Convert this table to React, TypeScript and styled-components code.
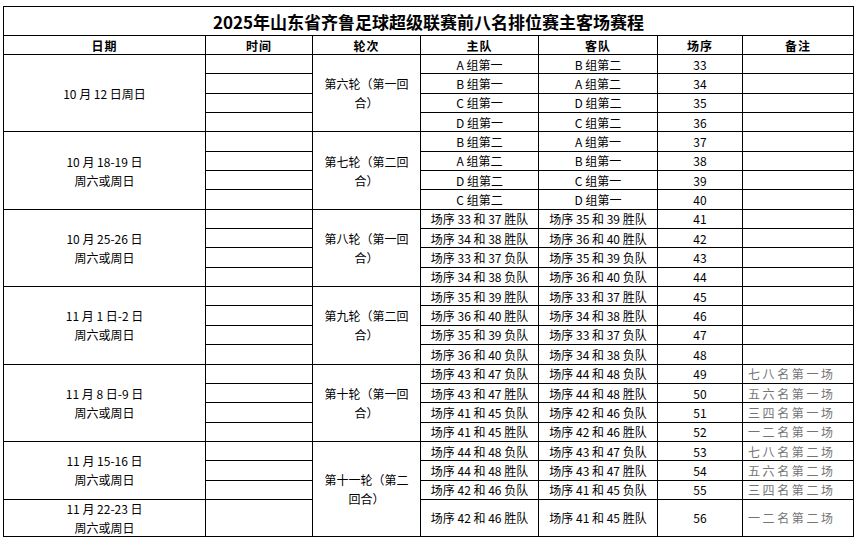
import React from 'react';
import styled, { createGlobalStyle } from 'styled-components';

const GlobalStyle = createGlobalStyle`
  html, body {
    margin: 0;
    padding: 0;
    background: #ffffff;
  }
  body {
    font-family: "Noto Sans CJK SC", "Noto Sans", sans-serif;
    color: #000;
  }
`;

const Page = styled.div`
  padding: 6px 0 0 3px;
`;

const Sheet = styled.div`
  display: grid;
  width: 851px;
  grid-template-columns: 202px 107px 108px 118px 119px 85px 111px;
  grid-template-rows: 29px 19px repeat(23, 19.35px) 37px;
  border-top: 1px solid #000;
  border-left: 1px solid #000;
  box-sizing: border-box;
`;

interface CellProps {
    $span?: number;
    $align?: 'left' | 'center';
}

const Cell = styled.div<CellProps>`
  grid-row: span ${p => p.$span || 1};
  border-right: 1px solid #000;
  border-bottom: 1px solid #000;
  display: flex;
  flex-direction: column;
  align-items: ${p => (p.$align === 'left' ? 'flex-start' : 'center')};
  justify-content: center;
  font-size: 12px;
  line-height: 19px;
  white-space: nowrap;
  overflow: hidden;
  min-width: 0;
`;

const TitleCell = styled(Cell)`
  grid-column: 1 / -1;
  font-size: 17px;
  font-weight: 700;
  line-height: 28px;
  padding-top: 1px;
`;

const HeadCell = styled(Cell)`
  font-size: 12px;
  font-weight: 700;
  letter-spacing: 1px;
`;

const NoteCell = styled(Cell)`
  padding-left: 5px;
  color: #747474;
  letter-spacing: 2.6px;
`;

const Line = styled.span`
  display: block;
`;

interface Match {
    home: string;
    away: string;
    no: number;
    note?: string;
}

interface DateBlock {
    lines: string[];
    rows: number;
}

interface Round {
    lines: string[];
    dates: DateBlock[];
    matches: Match[];
}

const seq = (a: number, b: number, r: '胜' | '负') => `场序 ${a} 和 ${b} ${r}队`;

const rounds: Round[] = [
    {
        lines: ['第六轮（第一回', '合）'],
        dates: [{ lines: ['10 月 12 日周日'], rows: 4 }],
        matches: [
            { home: 'A 组第一', away: 'B 组第二', no: 33 },
            { home: 'B 组第一', away: 'A 组第二', no: 34 },
            { home: 'C 组第一', away: 'D 组第二', no: 35 },
            { home: 'D 组第一', away: 'C 组第二', no: 36 },
        ],
    },
    {
        lines: ['第七轮（第二回', '合）'],
        dates: [{ lines: ['10 月 18-19 日', '周六或周日'], rows: 4 }],
        matches: [
            { home: 'B 组第二', away: 'A 组第一', no: 37 },
            { home: 'A 组第二', away: 'B 组第一', no: 38 },
            { home: 'D 组第二', away: 'C 组第一', no: 39 },
            { home: 'C 组第二', away: 'D 组第一', no: 40 },
        ],
    },
    {
        lines: ['第八轮（第一回', '合）'],
        dates: [{ lines: ['10 月 25-26 日', '周六或周日'], rows: 4 }],
        matches: [
            { home: seq(33, 37, '胜'), away: seq(35, 39, '胜'), no: 41 },
            { home: seq(34, 38, '胜'), away: seq(36, 40, '胜'), no: 42 },
            { home: seq(33, 37, '负'), away: seq(35, 39, '负'), no: 43 },
            { home: seq(34, 38, '负'), away: seq(36, 40, '负'), no: 44 },
        ],
    },
    {
        lines: ['第九轮（第二回', '合）'],
        dates: [{ lines: ['11 月 1 日-2 日', '周六或周日'], rows: 4 }],
        matches: [
            { home: seq(35, 39, '胜'), away: seq(33, 37, '胜'), no: 45 },
            { home: seq(36, 40, '胜'), away: seq(34, 38, '胜'), no: 46 },
            { home: seq(35, 39, '负'), away: seq(33, 37, '负'), no: 47 },
            { home: seq(36, 40, '负'), away: seq(34, 38, '负'), no: 48 },
        ],
    },
    {
        lines: ['第十轮（第一回', '合）'],
        dates: [{ lines: ['11 月 8 日-9 日', '周六或周日'], rows: 4 }],
        matches: [
            { home: seq(43, 47, '负'), away: seq(44, 48, '负'), no: 49, note: '七八名第一场' },
            { home: seq(43, 47, '胜'), away: seq(44, 48, '胜'), no: 50, note: '五六名第一场' },
            { home: seq(41, 45, '负'), away: seq(42, 46, '负'), no: 51, note: '三四名第一场' },
            { home: seq(41, 45, '胜'), away: seq(42, 46, '胜'), no: 52, note: '一二名第一场' },
        ],
    },
    {
        lines: ['第十一轮（第二', '回合）'],
        dates: [
            { lines: ['11 月 15-16 日', '周六或周日'], rows: 3 },
            { lines: ['11 月 22-23 日', '周六或周日'], rows: 1 },
        ],
        matches: [
            { home: seq(44, 48, '负'), away: seq(43, 47, '负'), no: 53, note: '七八名第二场' },
            { home: seq(44, 48, '胜'), away: seq(43, 47, '胜'), no: 54, note: '五六名第二场' },
            { home: seq(42, 46, '负'), away: seq(41, 45, '负'), no: 55, note: '三四名第二场' },
            { home: seq(42, 46, '胜'), away: seq(41, 45, '胜'), no: 56, note: '一二名第二场' },
        ],
    },
];

const headers = ['日期', '时间', '轮次', '主队', '客队', '场序', '备注'];

// cells are emitted row by row; the spanning date/round cells get skipped by auto placement
const renderRound = (round: Round) => {
    const out: React.ReactNode[] = [];
    let dateIdx = 0;
    let nextDateRow = 0;
    round.matches.forEach((m, i) => {
        if (i === nextDateRow && dateIdx < round.dates.length) {
            const d = round.dates[dateIdx];
            out.push(
                <Cell key={`d${m.no}`} $span={d.rows}>
                    {d.lines.map(l => <Line key={l}>{l}</Line>)}
                </Cell>
            );
            nextDateRow += d.rows;
            dateIdx++;
        }
        out.push(<Cell key={`t${m.no}`} />);
        if (i === 0) {
            out.push(
                <Cell key={`r${m.no}`} $span={round.matches.length}>
                    {round.lines.map(l => <Line key={l}>{l}</Line>)}
                </Cell>
            );
        }
        out.push(<Cell key={`h${m.no}`}>{m.home}</Cell>);
        out.push(<Cell key={`a${m.no}`}>{m.away}</Cell>);
        out.push(<Cell key={`n${m.no}`}>{m.no}</Cell>);
        out.push(<NoteCell key={`c${m.no}`} $align="left">{m.note}</NoteCell>);
    });
    return out;
};

const App = () => {
    return (
        <>
            <GlobalStyle />
            <Page>
                <Sheet>
                    <TitleCell>2025年山东省齐鲁足球超级联赛前八名排位赛主客场赛程</TitleCell>
                    {headers.map(h => <HeadCell key={h}>{h}</HeadCell>)}
                    {rounds.map(r => renderRound(r))}
                </Sheet>
            </Page>
        </>
    );
};

export default App;
